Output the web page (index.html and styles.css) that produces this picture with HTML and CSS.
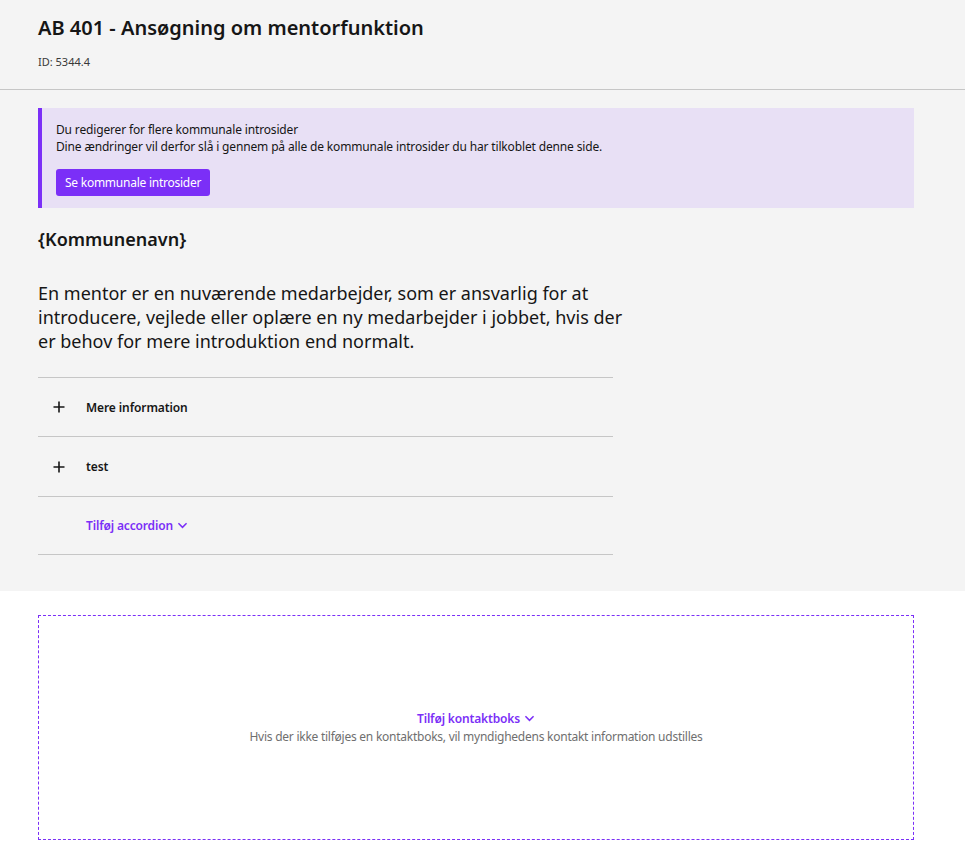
FILE: index.html
```html
<!DOCTYPE html>
<html lang="da">
<head>
<meta charset="utf-8">
<title>AB 401 - Ansøgning om mentorfunktion</title>
<link rel="stylesheet" href="styles.css">
</head>
<body>
<div class="gray">
  <header class="header">
    <h1 class="title">AB 401 - Ansøgning om mentorfunktion</h1>
    <div class="id">ID: 5344.4</div>
  </header>
  <main class="content">
    <div class="notice">
      <p class="notice-line">Du redigerer for flere kommunale introsider</p>
      <p class="notice-line">Dine ændringer vil derfor slå i gennem på alle de kommunale introsider du har tilkoblet denne side.</p>
      <button class="btn">Se kommunale introsider</button>
    </div>
    <h2 class="kommune">{Kommunenavn}</h2>
    <p class="lead">En mentor er en nuværende medarbejder, som er ansvarlig for at introducere, vejlede eller oplære en ny medarbejder i jobbet, hvis der er behov for mere introduktion end normalt.</p>
    <div class="accordion">
      <div class="acc-row">
        <svg class="plus" width="12" height="12" viewBox="0 0 12 12"><path d="M6 0.5v11M0.5 6h11" stroke="#161616" stroke-width="1.6"/></svg>
        <span class="acc-title">Mere information</span>
      </div>
      <div class="acc-row tall">
        <svg class="plus" width="12" height="12" viewBox="0 0 12 12"><path d="M6 0.5v11M0.5 6h11" stroke="#161616" stroke-width="1.6"/></svg>
        <span class="acc-title">test</span>
      </div>
      <div class="acc-row add">
        <span class="link">Tilføj accordion
          <svg class="chev" width="11" height="11" viewBox="0 0 10 10"><path d="M1.3 3L5 6.7 8.7 3" fill="none" stroke="#7b2ff7" stroke-width="1.4"/></svg>
        </span>
      </div>
    </div>
  </main>
</div>
<section class="white">
  <div class="dropzone">
    <span class="link">Tilføj kontaktboks
      <svg class="chev" width="11" height="11" viewBox="0 0 10 10"><path d="M1.3 3L5 6.7 8.7 3" fill="none" stroke="#7b2ff7" stroke-width="1.4"/></svg>
    </span>
    <p class="hint">Hvis der ikke tilføjes en kontaktboks, vil myndighedens kontakt information udstilles</p>
  </div>
</section>
</body>
</html>
```
FILE: styles.css
```css
* { box-sizing: border-box; }
body {
  margin: 0;
  background: #ffffff;
  font-family: "Noto Sans", "Open Sans", sans-serif;
  color: #161616;
}
.gray {
  background: #f4f4f4;
  padding-bottom: 36px;
}
.header {
  padding: 14px 38px 0;
  height: 90px;
  border-bottom: 1px solid #c6c6c6;
}
.title {
  margin: 0;
  font-size: 20px;
  line-height: 28px;
  font-weight: 600;
}
.id {
  margin-top: 12px;
  font-size: 11px;
  line-height: 16px;
  color: #393939;
}
.content {
  padding: 18px 51px 0 38px;
}
.notice {
  background: #e8e0f5;
  border-left: 4px solid #7b2ff7;
  padding: 13px 14px 12px;
  height: 100px;
}
.notice-line {
  margin: 0;
  font-size: 12px;
  line-height: 17px;
  letter-spacing: -0.15px;
}
.btn {
  margin-top: 14px;
  background: #7b2ff7;
  color: #ffffff;
  border: none;
  border-radius: 3px;
  font-family: inherit;
  font-size: 12px;
  letter-spacing: -0.25px;
  height: 27px;
  padding: 0 9px;
}
.kommune {
  margin: 18px 0 0;
  font-size: 18px;
  line-height: 26px;
  font-weight: 600;
}
.lead {
  margin: 29px 0 0;
  width: 595px;
  font-size: 18px;
  line-height: 24px;
  font-weight: 400;
}
.accordion {
  width: 575px;
  margin-top: 24px;
  border-top: 1px solid #c6c6c6;
}
.acc-row {
  display: flex;
  align-items: center;
  height: 59px;
  border-bottom: 1px solid #c6c6c6;
  padding-left: 15px;
}
.acc-row.tall { height: 60px; }
.acc-row.add {
  height: 58px;
  padding-left: 48px;
}
.plus { flex: none; }
.acc-title {
  margin-left: 21px;
  font-size: 12px;
  font-weight: 600;
  letter-spacing: -0.1px;
}
.link {
  display: inline-flex;
  align-items: center;
  gap: 4px;
  color: #7b2ff7;
  font-size: 12px;
  font-weight: 600;
  letter-spacing: -0.15px;
}
.white {
  padding: 24px 51px 5px 38px;
}
.dropzone {
  height: 225px;
  border: 1px dashed #7b2ff7;
  display: flex;
  flex-direction: column;
  align-items: center;
  justify-content: center;
}
.hint {
  margin: 2px 0 0;
  font-size: 12px;
  line-height: 16px;
  color: #6f6f6f;
  letter-spacing: -0.25px;
}
```
